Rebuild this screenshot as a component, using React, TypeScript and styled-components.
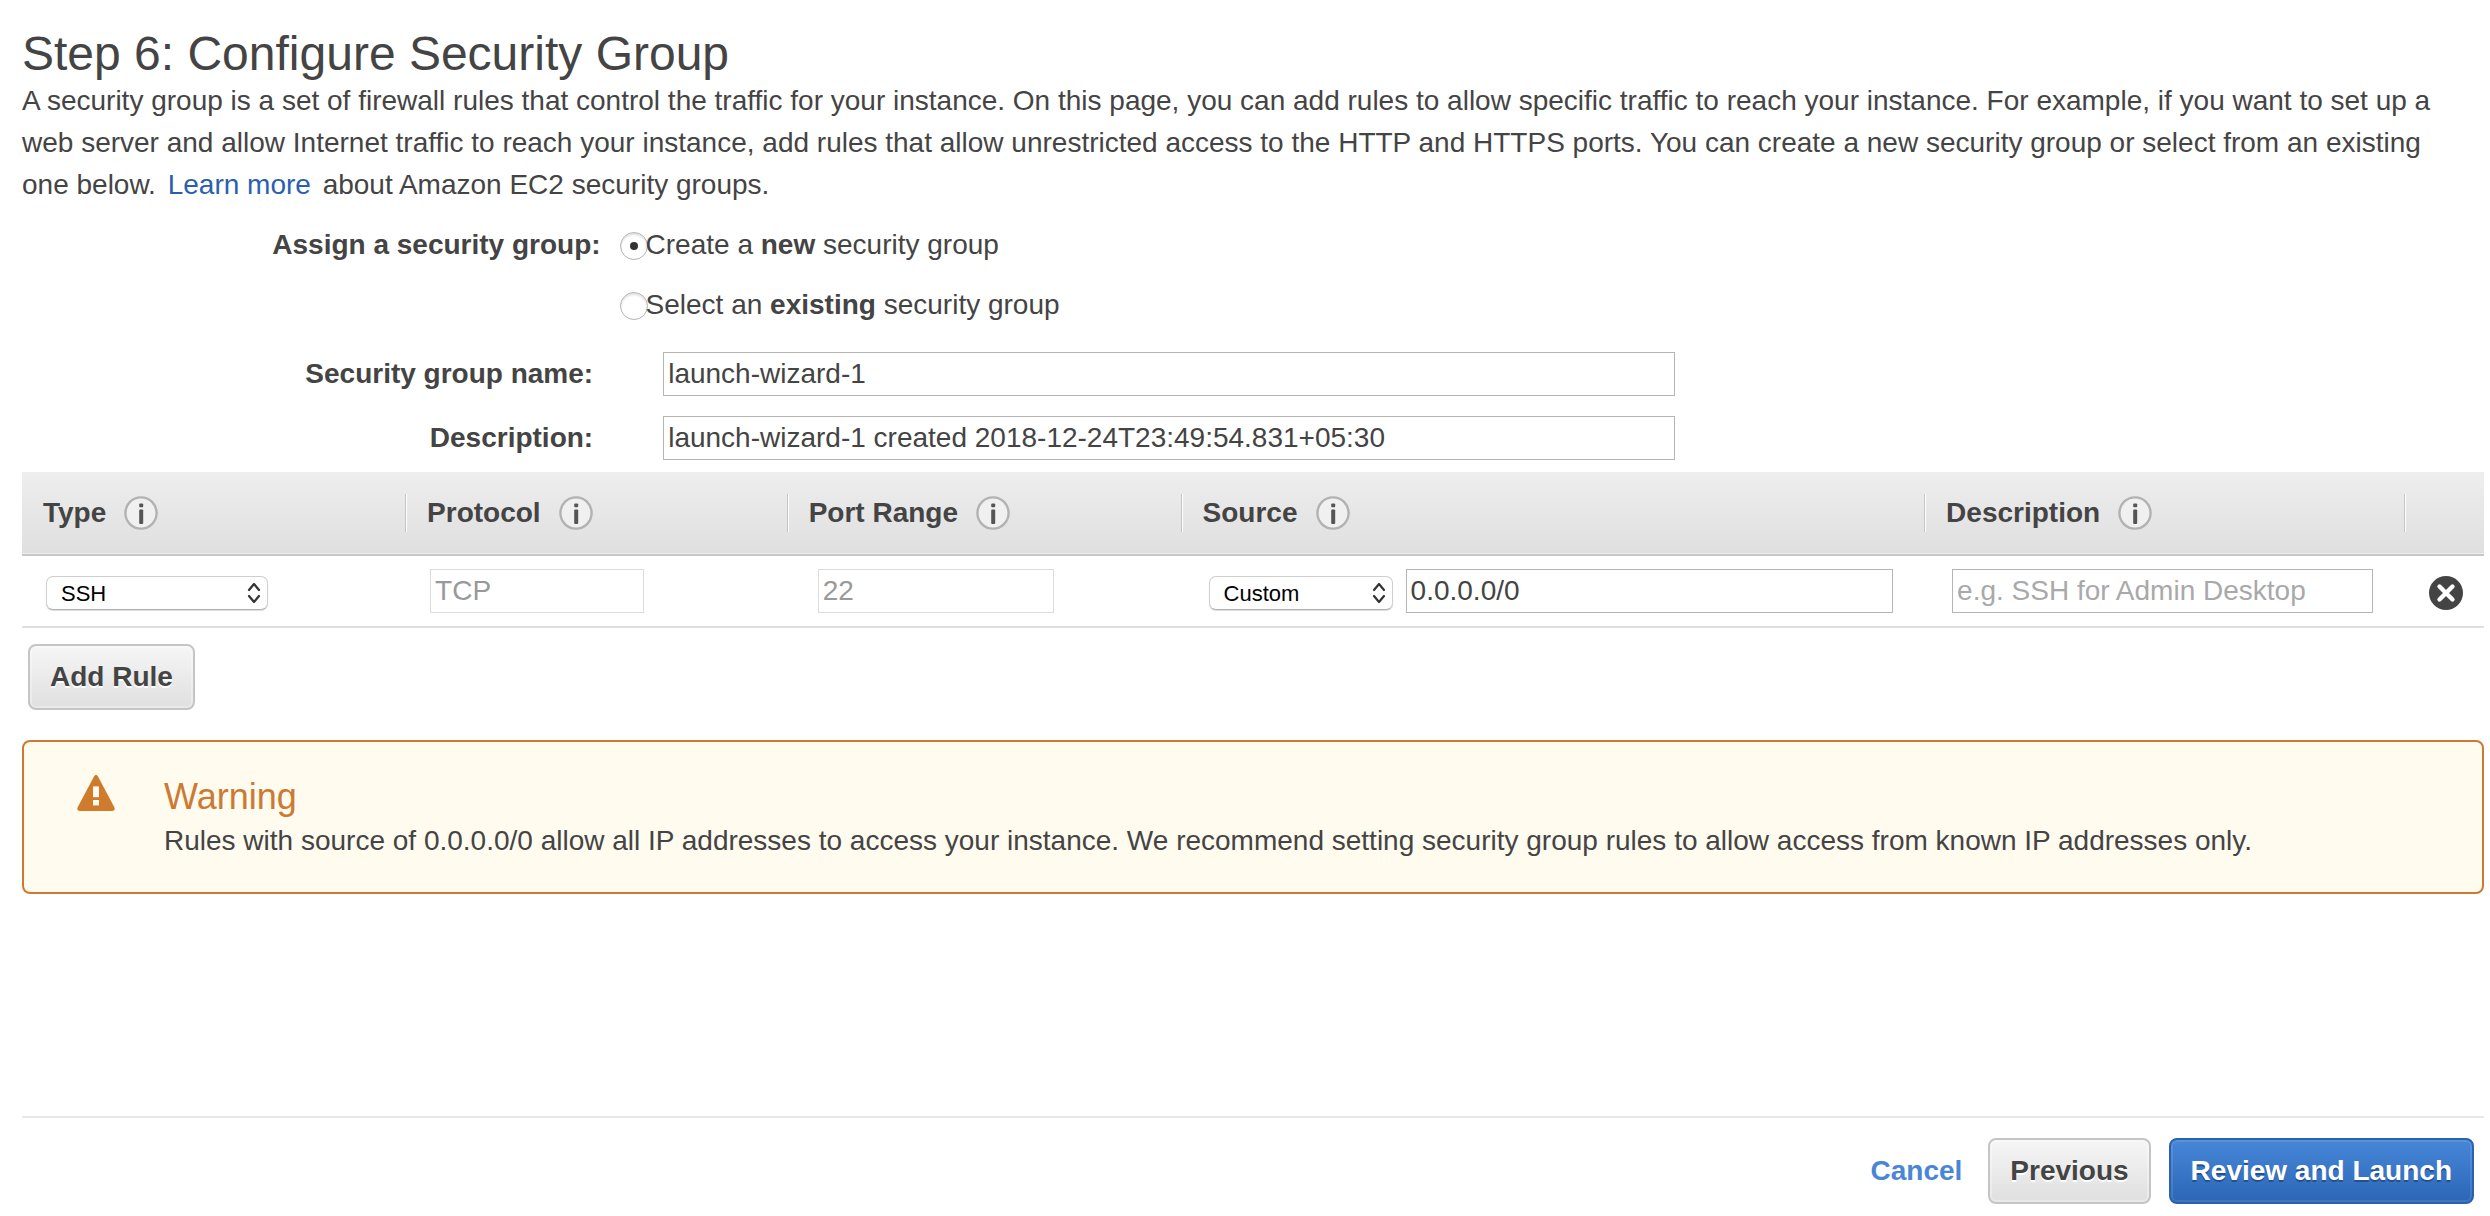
import React, { useState } from "react";
import styled, { createGlobalStyle, css } from "styled-components";

const GlobalStyle = createGlobalStyle`
  *, *::before, *::after { box-sizing: border-box; }
  body {
    margin: 0;
    background: #fff;
    color: #444;
    font-family: "Liberation Sans", Arial, sans-serif;
    font-size: 28px;
    line-height: 42px;
  }
  input, select, button { font-family: inherit; }
`;

const Page = styled.main`
  display: flex;
  flex-direction: column;
  min-height: 100vh;
  padding: 28px 6px 12px 22px;
`;

const Title = styled.h1`
  margin: 0;
  font-size: 48px;
  line-height: 52px;
  font-weight: 400;
`;

const Intro = styled.p`
  margin: 0 0 18px;
  padding-right: 20px;
`;

const LearnMore = styled.a`
  margin: 0 4px;
  color: #2a5fb0;
  text-decoration: none;
`;

const AssignRow = styled.div`
  display: grid;
  grid-template-columns: 23.5% 1fr;
  column-gap: 19px;
  margin-bottom: 26px;
`;

const RowLabel = styled.span`
  font-weight: 700;
  text-align: right;
`;

const RadioList = styled.div`
  display: flex;
  flex-direction: column;
  gap: 18px;
`;

const RadioLabel = styled.label`
  display: flex;
  align-items: center;
  white-space: pre;
`;

const Radio = styled.input`
  appearance: none;
  display: grid;
  place-items: center;
  width: 28px;
  height: 28px;
  margin: 2px -2px 0 0;
  border: 1px solid #b4b4b4;
  border-radius: 50%;
  background: #fff;
  box-shadow: inset 0 2px 2px #e2e2e2;
  &:checked::before {
    content: "";
    width: 8px;
    height: 8px;
    border-radius: 50%;
    background: #333;
  }
`;

const FieldList = styled.div`
  display: flex;
  flex-direction: column;
  gap: 20px;
  margin-bottom: 12px;
`;

const FieldRow = styled.div`
  display: grid;
  grid-template-columns: 23.2% 1fr;
  column-gap: 70px;
  align-items: center;
`;

const FieldLabel = styled.label`
  font-weight: 700;
  text-align: right;
`;

const TextInput = styled.input<{ $width?: string }>`
  width: ${(p) => p.$width ?? "100%"};
  max-width: 100%;
  min-width: 0;
  height: 44px;
  padding: 0 4px;
  border: 1px solid #b5b5b5;
  border-radius: 0;
  background: #fff;
  color: #444;
  font-size: 28px;
  outline: none;
  &::placeholder { color: #a9a9a9; opacity: 1; }
  &:disabled { border-color: #dcdcdc; color: #999; }
`;

const RulesTable = styled.table`
  width: 100%;
  table-layout: fixed;
  border-collapse: collapse;
`;

const HeadRow = styled.tr`
  background: linear-gradient(#eee, #dfdfdf);
  border-bottom: 2px solid #c8c8c8;
`;

const HeadCell = styled.th`
  padding: 22px 0;
  text-align: left;
`;

const HeadContent = styled.div<{ $divider: boolean }>`
  display: flex;
  align-items: center;
  gap: 18px;
  height: 38px;
  padding-left: 21px;
  ${(p) =>
    p.$divider &&
    css`
      border-right: 1px solid #c4c4c4;
      box-shadow: 1px 0 0 #fff;
    `}
`;

const RuleRow = styled.tr`
  border-bottom: 2px solid #dfdfdf;
`;

const RuleCell = styled.td<{ $inset: number }>`
  height: 72px;
  padding: 0 32px 0 ${(p) => p.$inset}px;
`;

const CellContent = styled.div`
  display: flex;
  align-items: center;
  gap: 13px;
  height: 46px;
`;

const SelectBox = styled.span<{ $width: number }>`
  display: grid;
  flex: none;
  align-items: center;
  width: ${(p) => p.$width}px;
  margin-top: 4px;
  > * { grid-area: 1 / 1; }
  > svg { justify-self: end; margin-right: 7px; pointer-events: none; }
`;

const Select = styled.select`
  appearance: none;
  width: 100%;
  height: 34px;
  padding: 0 14px;
  border: 1px solid #cfcfcf;
  border-bottom-color: #b0b0b0;
  border-radius: 7px;
  background: #fff;
  box-shadow: 0 1px 1px #ddd;
  color: #000;
  font-size: 22px;
`;

const IconButton = styled.button`
  display: block;
  padding: 0;
  border: 0;
  background: none;
  cursor: pointer;
  > svg { display: block; }
`;

const RemoveButton = styled(IconButton)`
  margin-top: 4px;
`;

const Button = styled.button<{ $primary?: boolean }>`
  height: 66px;
  padding: 0 20px;
  border: 2px solid #c5c5c5;
  border-radius: 8px;
  background: linear-gradient(#f6f6f6, #dfdfdf);
  box-shadow: inset 0 0 0 2px rgba(255, 255, 255, 0.3);
  color: #444;
  font-size: 28px;
  font-weight: 700;
  text-shadow: 0 2px 0 #fff;
  white-space: nowrap;
  ${(p) =>
    p.$primary &&
    css`
      border-color: #2a62ad;
      background: linear-gradient(#4787d8, #2c66b6);
      box-shadow: inset 0 0 0 2px rgba(255, 255, 255, 0.1);
      color: #fff;
      text-shadow: 0 2px 0 #24508f;
    `}
`;

const AddRuleArea = styled.div`
  padding: 16px 6px 30px;
  line-height: 0;
`;

const WarningBox = styled.section`
  display: flex;
  gap: 49px;
  padding: 32px 20px 30px 53px;
  border: 2px solid #cc7a33;
  border-radius: 8px;
  background: #fffbef;
  > svg { flex: none; }
`;

const WarningTitle = styled.h2`
  margin: 0;
  color: #cc7a33;
  font-size: 36px;
  line-height: 46px;
  font-weight: 400;
`;

const WarningText = styled.p`
  margin: 0;
`;

const Footer = styled.footer`
  display: flex;
  align-items: center;
  justify-content: flex-end;
  gap: 18px;
  margin-top: auto;
  padding: 20px 10px 0 0;
  border-top: 2px solid #e8e8e8;
`;

const CancelLink = styled.a`
  margin-right: 8px;
  color: #4a86d6;
  font-weight: 700;
  text-decoration: none;
`;

const InfoIcon = () => (
  <svg width="34" height="34" viewBox="0 0 34 34" aria-hidden="true">
    <circle cx="17" cy="17" r="15.6" fill="#f0f0f0" stroke="#b2b2b2" strokeWidth="2.4" />
    <rect x="15.2" y="7.6" width="4" height="3.6" rx="1" fill="#555" />
    <rect x="15.2" y="13.4" width="4" height="14.6" rx="1" fill="#555" />
  </svg>
);

const Chevrons = () => (
  <svg width="14" height="22" viewBox="0 0 14 22" fill="none" stroke="#333" strokeWidth="2.2" strokeLinecap="round" strokeLinejoin="round" aria-hidden="true">
    <path d="M2 8 7 2l5 6M2 14l5 6 5-6" />
  </svg>
);

const RemoveIcon = () => (
  <svg width="34" height="34" viewBox="0 0 34 34" aria-hidden="true">
    <circle cx="17" cy="17" r="17" fill="#444" />
    <path d="M10.5 10.5l13 13m0-13l-13 13" stroke="#fff" strokeWidth="4.4" strokeLinecap="round" />
  </svg>
);

const WarningIcon = () => (
  <svg width="38" height="38" viewBox="0 0 38 38" aria-hidden="true">
    <path d="M17 2.4Q19 -.8 21 2.4L37.2 33Q39 37 35 37H3Q-1 37 .8 33Z" fill="#d07a2c" />
    <rect x="16" y="12.4" width="6" height="10.8" fill="#fffbef" />
    <rect x="16" y="26" width="6" height="5.4" fill="#fffbef" />
  </svg>
);

const columns = [
  { title: "Type", width: "15.6%" },
  { title: "Protocol", width: "15.5%" },
  { title: "Port Range", width: "16%" },
  { title: "Source", width: "30.2%" },
  { title: "Description", width: "19.5%" },
];

export default function App() {
  const [mode, setMode] = useState("new");
  return (
    <>
      <GlobalStyle />
      <Page>
        <Title>Step 6: Configure Security Group</Title>
        <Intro>
          A security group is a set of firewall rules that control the traffic for your instance. On this page, you can
          add rules to allow specific traffic to reach your instance. For example, if you want to set up a web server and
          allow Internet traffic to reach your instance, add rules that allow unrestricted access to the HTTP and HTTPS
          ports. You can create a new security group or select from an existing one below.{" "}
          <LearnMore href="#learn-more">Learn more</LearnMore> about Amazon EC2 security groups.
        </Intro>

        <AssignRow role="radiogroup" aria-labelledby="assign-label">
          <RowLabel id="assign-label">Assign a security group:</RowLabel>
          <RadioList>
            <RadioLabel>
              <Radio type="radio" name="mode" checked={mode === "new"} onChange={() => setMode("new")} />
              <span>
                Create a <b>new</b> security group
              </span>
            </RadioLabel>
            <RadioLabel>
              <Radio type="radio" name="mode" checked={mode === "existing"} onChange={() => setMode("existing")} />
              <span>
                Select an <b>existing</b> security group
              </span>
            </RadioLabel>
          </RadioList>
        </AssignRow>
        <FieldList>
          <FieldRow>
            <FieldLabel htmlFor="group-name">Security group name:</FieldLabel>
            <TextInput id="group-name" $width="1012px" defaultValue="launch-wizard-1" />
          </FieldRow>
          <FieldRow>
            <FieldLabel htmlFor="group-description">Description:</FieldLabel>
            <TextInput
              id="group-description"
              $width="1012px"
              defaultValue="launch-wizard-1 created 2018-12-24T23:49:54.831+05:30"
            />
          </FieldRow>
        </FieldList>

        <RulesTable>
          <colgroup>
            {columns.map((c) => (
              <col key={c.title} style={{ width: c.width }} />
            ))}
            <col />
          </colgroup>
          <thead>
            <HeadRow>
              {columns.map((c) => (
                <HeadCell key={c.title} scope="col">
                  <HeadContent $divider>
                    {c.title}
                    <IconButton type="button" aria-label={`About ${c.title}`}>
                      <InfoIcon />
                    </IconButton>
                  </HeadContent>
                </HeadCell>
              ))}
              <HeadCell scope="col" aria-label="Remove">
                <HeadContent $divider={false} />
              </HeadCell>
            </HeadRow>
          </thead>
          <tbody>
            <RuleRow>
              <RuleCell $inset={24}>
                <CellContent>
                  <SelectBox $width={222}>
                    <Select aria-label="Type" defaultValue="SSH">
                      <option>SSH</option>
                      <option>HTTP</option>
                      <option>HTTPS</option>
                    </Select>
                    <Chevrons />
                  </SelectBox>
                </CellContent>
              </RuleCell>
              <RuleCell $inset={24}>
                <CellContent>
                  <TextInput aria-label="Protocol" $width="214px" disabled defaultValue="TCP" />
                </CellContent>
              </RuleCell>
              <RuleCell $inset={30}>
                <CellContent>
                  <TextInput aria-label="Port Range" $width="236px" disabled defaultValue="22" />
                </CellContent>
              </RuleCell>
              <RuleCell $inset={27}>
                <CellContent>
                  <SelectBox $width={184}>
                    <Select aria-label="Source type" defaultValue="Custom">
                      <option>Custom</option>
                      <option>Anywhere</option>
                      <option>My IP</option>
                    </Select>
                    <Chevrons />
                  </SelectBox>
                  <TextInput aria-label="Source" defaultValue="0.0.0.0/0" />
                </CellContent>
              </RuleCell>
              <RuleCell $inset={27}>
                <CellContent>
                  <TextInput aria-label="Rule description" placeholder="e.g. SSH for Admin Desktop" />
                </CellContent>
              </RuleCell>
              <RuleCell $inset={24}>
                <CellContent>
                  <RemoveButton type="button" aria-label="Remove rule">
                    <RemoveIcon />
                  </RemoveButton>
                </CellContent>
              </RuleCell>
            </RuleRow>
          </tbody>
        </RulesTable>

        <AddRuleArea>
          <Button type="button">Add Rule</Button>
        </AddRuleArea>

        <WarningBox>
          <WarningIcon />
          <div>
            <WarningTitle>Warning</WarningTitle>
            <WarningText>
              Rules with source of 0.0.0.0/0 allow all IP addresses to access your instance. We recommend setting
              security group rules to allow access from known IP addresses only.
            </WarningText>
          </div>
        </WarningBox>

        <Footer>
          <CancelLink href="#cancel">Cancel</CancelLink>
          <Button type="button">Previous</Button>
          <Button type="button" $primary>
            Review and Launch
          </Button>
        </Footer>
      </Page>
    </>
  );
}
